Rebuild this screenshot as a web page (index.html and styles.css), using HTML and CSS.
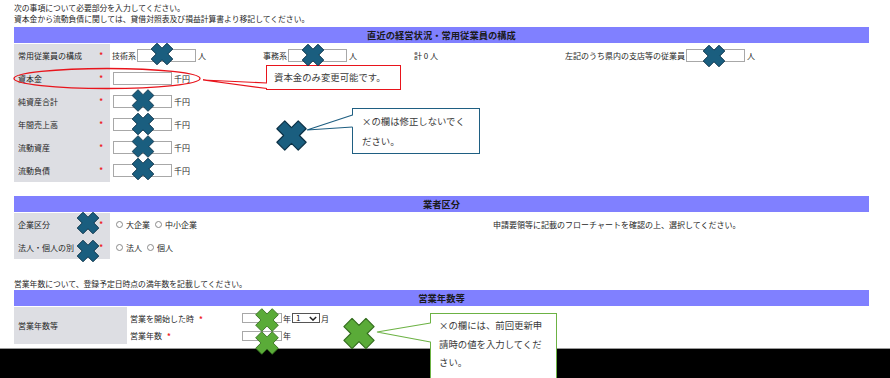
FILE: index.html
```html
<!DOCTYPE html>
<html lang="ja">
<head>
<meta charset="utf-8">
<title>経営状況</title>
<link rel="stylesheet" href="styles.css">
</head>
<body>
<div class="page">
  <div class="intro">
    <p>次の事項について必要部分を入力してください。</p>
    <p>資本金から流動負債に関しては、貸借対照表及び損益計算書より移記してください。</p>
  </div>

  <section class="sec sec1">
    <div class="bar">直近の経営状況・常用従業員の構成</div>
    <div class="row">
      <div class="lab"><span>常用従業員の構成</span><span class="req">*</span></div>
      <div class="val staff">
        <div class="cell">技術系<input class="inp" type="text">人</div>
        <div class="cell">事務系<input class="inp" type="text">人</div>
        <div class="cell">計 0 人</div>
        <div class="cell">左記のうち県内の支店等の従業員<input class="inp" type="text">人</div>
      </div>
    </div>
    <div class="row">
      <div class="lab"><span>資本金</span><span class="req">*</span></div>
      <div class="val"><input class="inp" type="text">千円</div>
    </div>
    <div class="row">
      <div class="lab"><span>純資産合計</span><span class="req">*</span></div>
      <div class="val"><input class="inp" type="text">千円</div>
    </div>
    <div class="row">
      <div class="lab"><span>年間売上高</span><span class="req">*</span></div>
      <div class="val"><input class="inp" type="text">千円</div>
    </div>
    <div class="row">
      <div class="lab"><span>流動資産</span><span class="req">*</span></div>
      <div class="val"><input class="inp" type="text">千円</div>
    </div>
    <div class="row">
      <div class="lab"><span>流動負債</span><span class="req">*</span></div>
      <div class="val"><input class="inp" type="text">千円</div>
    </div>
  </section>

  <section class="sec sec2">
    <div class="bar">業者区分</div>
    <div class="row">
      <div class="lab"><span>企業区分</span><span class="req">*</span></div>
      <div class="val radios">
        <div class="choices">
          <span class="radio"></span><span class="opt">大企業</span>
          <span class="radio"></span><span class="opt">中小企業</span>
        </div>
        <span class="hint">申請要領等に記載のフローチャートを確認の上、選択してください。</span>
      </div>
    </div>
    <div class="row">
      <div class="lab"><span>法人・個人の別</span><span class="req">*</span></div>
      <div class="val radios">
        <div class="choices">
          <span class="radio"></span><span class="opt">法人</span>
          <span class="radio"></span><span class="opt">個人</span>
        </div>
      </div>
    </div>
  </section>

  <p class="note3">営業年数について、登録予定日時点の満年数を記載してください。</p>

  <section class="sec sec3">
    <div class="bar">営業年数等</div>
    <div class="row3">
      <div class="lab3">営業年数等</div>
      <div class="subs">
        <div class="sub">
          <div class="sublab">営業を開始した時<span class="req">*</span></div>
          <div class="subval"><input class="inp small" type="text">年<span class="sel">1<svg class="chev" viewBox="0 0 10 6" width="8" height="5"><path d="M1 1 L5 5 L9 1" fill="none" stroke="#222" stroke-width="1.8"/></svg></span>月</div>
        </div>
        <div class="sub">
          <div class="sublab">営業年数<span class="req">*</span></div>
          <div class="subval"><input class="inp small" type="text">年</div>
        </div>
      </div>
    </div>
  </section>
</div>
<div class="footer"></div>

<div class="co co-red">資本金のみ変更可能です。</div>
<div class="co co-blue">×の欄は修正しないでく<br>ださい。</div>
<div class="co co-green">×の欄には、前回更新申<br>請時の値を入力してくだ<br>さい。</div>

<svg class="marks" width="890" height="378" viewBox="0 0 890 378">
  <defs>
    <symbol id="xb" viewBox="-3 -3 106 106">
      <polygon points="27,0 50,23 73,0 100,27 77,50 100,73 73,100 50,77 27,100 0,73 23,50 0,27" fill="#1a5e7f" stroke="#0c3146" stroke-width="4" stroke-linejoin="round"/>
    </symbol>
    <symbol id="xg" viewBox="-3 -3 106 106">
      <polygon points="27,0 50,23 73,0 100,27 77,50 100,73 73,100 50,77 27,100 0,73 23,50 0,27" fill="#5aab38" stroke="#356f1f" stroke-width="4" stroke-linejoin="round"/>
    </symbol>
  </defs>
  <ellipse cx="107" cy="78.5" rx="93" ry="10" fill="none" stroke="#e8141c" stroke-width="1.3"/>
  <polygon points="203,80 268,83 268,88.5" fill="#fff"/>
  <polyline points="267,83 203,80 267,88.5" fill="none" stroke="#e8141c" stroke-width="1.2"/>
  <polygon points="307,130 353.5,115 353.5,127" fill="#fff"/>
  <polyline points="352.5,115 307,130 352.5,127" fill="none" stroke="#1f5f82" stroke-width="1.2"/>
  <polygon points="377,332 431.5,323 431.5,342" fill="#fff"/>
  <polyline points="430.5,323 377,332 430.5,342" fill="none" stroke="#6cb244" stroke-width="1.2"/>

  <use href="#xb" x="150.5" y="42.5" width="23" height="23"/>
  <use href="#xb" x="301.5" y="43.5" width="23" height="23"/>
  <use href="#xb" x="702.5" y="44.5" width="23" height="23"/>
  <use href="#xb" x="131.5" y="89" width="23" height="23"/>
  <use href="#xb" x="131.5" y="112.5" width="23" height="23"/>
  <use href="#xb" x="131.5" y="135" width="23" height="23"/>
  <use href="#xb" x="131.5" y="157.5" width="23" height="23"/>
  <use href="#xb" x="76.5" y="211.5" width="23" height="23"/>
  <use href="#xb" x="76.5" y="239.5" width="23" height="23"/>
  <use href="#xb" x="276" y="120" width="31" height="31"/>
  <use href="#xg" x="255" y="308" width="24" height="24"/>
  <use href="#xg" x="255" y="331" width="24" height="24"/>
  <use href="#xg" x="343" y="317.5" width="32" height="32"/>
</svg>
</body>
</html>
```

FILE: styles.css
```css
* { box-sizing: border-box; }
html, body { margin: 0; padding: 0; }
body {
  width: 890px;
  height: 378px;
  overflow: hidden;
  position: relative;
  background: #fff;
  font-family: "Noto Sans CJK JP", "Noto Sans", sans-serif;
  font-size: 8px;
  color: #262626;
}
.page { padding: 2px 21px 0 14px; }
.intro p { margin: 0; line-height: 11px; font-size: 7.8px; }

.sec { margin-top: 3px; }
.sec2 { margin-top: 14px; }
.bar {
  height: 16px;
  line-height: 16px;
  background: #8080ff;
  text-align: center;
  font-weight: bold;
  font-size: 9.3px;
  color: #1a1a1a;
  margin-bottom: 1px;
}
.row { display: flex; height: 23px; align-items: center; }
.lab {
  width: 96px;
  flex-shrink: 0;
  align-self: stretch;
  background: #dddee3;
  display: flex;
  align-items: center;
  justify-content: space-between;
  padding: 0 7px 0 4px;
}
.req { color: #ee1c24; font-size: 7.5px; font-weight: bold; margin-bottom: 2px; }
.val { flex: 1; padding-left: 2px; display: flex; align-items: center; }
.staff { display: grid; grid-template-columns: 151px 151px 151px auto; }
.cell { display: flex; align-items: center; white-space: nowrap; }
.inp {
  width: 59px;
  height: 13px;
  border: 1px solid #a8a8a8;
  background: #fff;
  padding: 0;
  margin: 0 2px 0 1px;
  font: inherit;
}
.inp.small { width: 40px; height: 10px; margin: 0 1px 0 0; }

.radios { padding-left: 6px; }
.choices { width: 377px; flex-shrink: 0; display: flex; align-items: center; }
.radio {
  width: 7px;
  height: 7px;
  border: 1px solid #8a8a8a;
  border-radius: 50%;
  margin-right: 3px;
  background: #fff;
}
.opt { margin-right: 5px; }
.hint { white-space: nowrap; }

.note3 { margin: 19px 0 1px; line-height: 11px; font-size: 7.8px; }
.sec3 { margin-top: 0; }
.row3 { display: flex; height: 37px; }
.lab3 {
  width: 113px;
  flex-shrink: 0;
  background: #dddee3;
  display: flex;
  align-items: center;
  padding-left: 4px;
}
.subs { flex: 1; padding-top: 2px; }
.sub { display: flex; align-items: center; height: 18px; }
.sub + .sub { height: 17px; }
.sublab { width: 113px; padding-left: 3px; }
.sublab .req { margin-left: 5px; }
.subval { padding-left: 2px; display: flex; align-items: center; }
.sel {
  display: inline-flex;
  align-items: center;
  justify-content: space-between;
  width: 28px;
  height: 10px;
  border: 1px solid #555;
  padding: 0 2px 0 3px;
  margin: 0 1px 0 1px;
  font-size: 8px;
  line-height: 8px;
  color: #111;
}
.chev { display: block; }

.footer {
  margin-top: 4px;
  height: 40px;
  background: #000;
  border-top: 1px solid #9a9a9a;
}

.co {
  position: absolute;
  background: #fff;
  color: #3a3a3a;
  font-size: 9.4px;
  white-space: nowrap;
}
.co-red {
  left: 266px; top: 65px; width: 135px; height: 25px;
  border: 1.5px solid #e8141c;
  padding-left: 7px;
  line-height: 22px;
}
.co-blue {
  left: 352px; top: 108px; width: 128px; height: 46px;
  border: 1.5px solid #1f5f82;
  padding: 1.5px 0 0 9px;
  line-height: 20px;
}
.co-green {
  left: 430px; top: 313px; width: 127px; height: 66px;
  border: 1.5px solid #6cb244;
  padding: 2px 0 0 8px;
  line-height: 18.5px;
}
.marks { position: absolute; left: 0; top: 0; pointer-events: none; }
```
